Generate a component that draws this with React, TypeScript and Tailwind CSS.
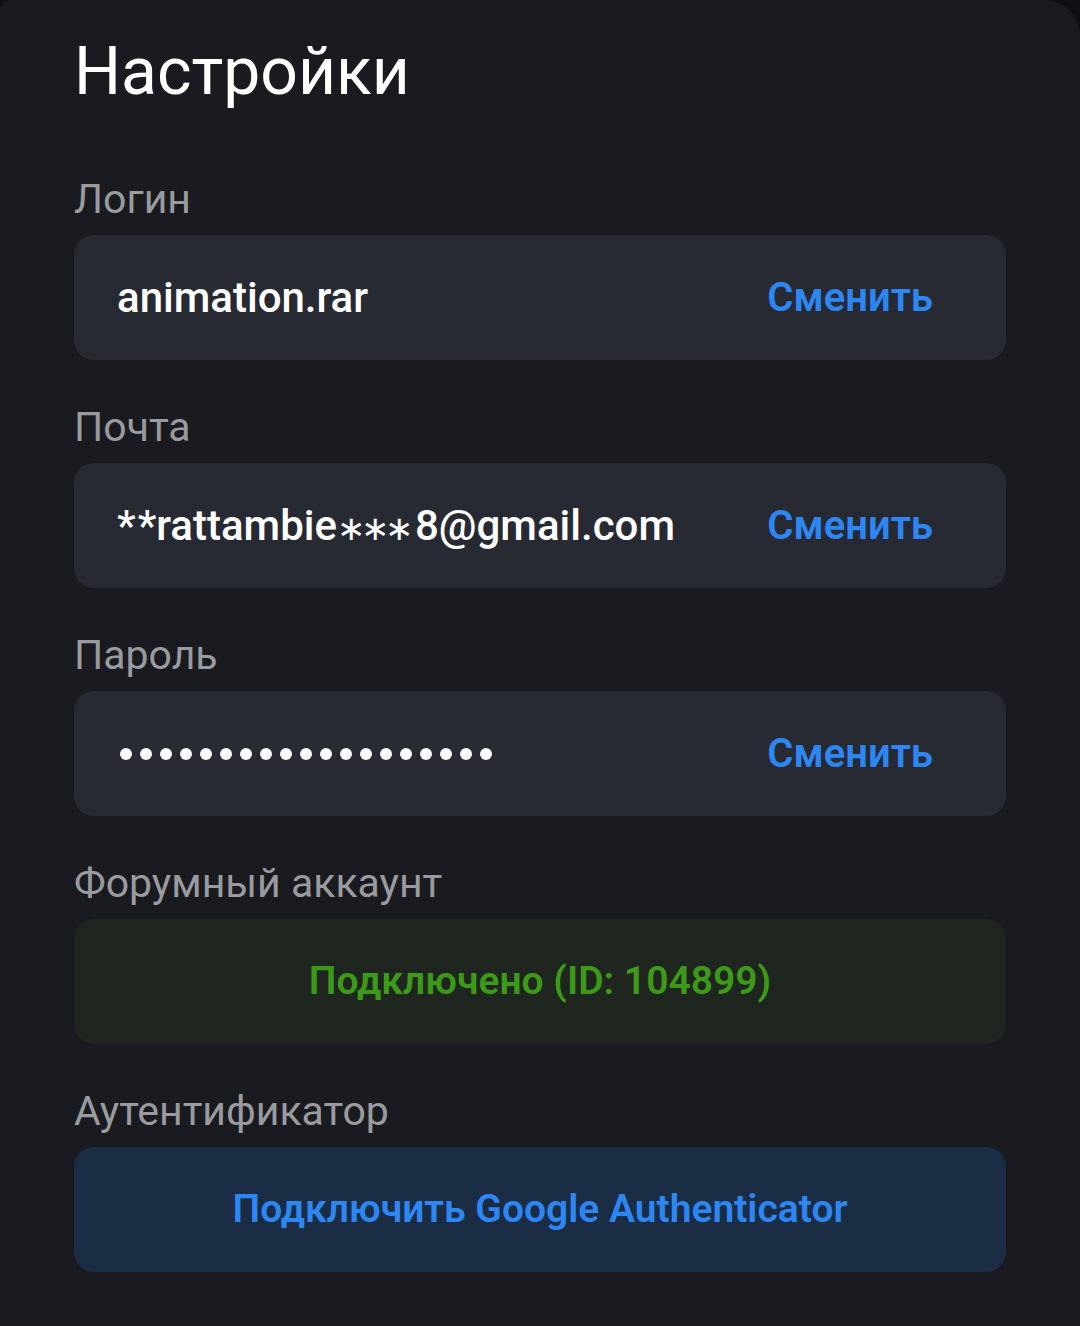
import React from 'react';

type Row = {
  label: string;
  value?: React.ReactNode;
  dots?: number;
};

const rows: Row[] = [
  { label: 'Логин', value: 'animation.rar' },
  {
    label: 'Почта',
    value: (
      <>
        <span className="tracking-[2px]">*</span>*rattambie<span className="text-[34px] tracking-[-4px]">∗∗∗</span><span className="ml-[6px]">8@gmail.com</span>
      </>
    ),
  },
  { label: 'Пароль', dots: 19 },
];

function Label({ children }: { children: React.ReactNode }) {
  return (
    <div className="mt-[43px] text-[41px] leading-[48px] text-[#9a9b9f]">{children}</div>
  );
}

export default function App() {
  return (
    <div className="min-h-[1326px] bg-[#0f1013] font-['Roboto','Noto_Sans',sans-serif]">
      <div className="min-h-[1326px] rounded-tl-[10px] rounded-tr-[36px] bg-[#1a1b20] px-[74px] pt-[32px]">
        <h1 className="text-[66px] leading-[80px] font-normal text-white">Настройки</h1>

        <div className="flex flex-col pt-[20px]">
          {rows.map((row) => (
            <div key={row.label} className="flex flex-col">
              <Label>{row.label}</Label>
              <div className="mt-[12px] flex h-[125px] items-center justify-between rounded-[20px] bg-[#282a33] pl-[43px] pr-[73px]">
                {row.value ? (
                  <span className="text-[42px] font-medium text-white">{row.value}</span>
                ) : (
                  <span className="ml-[3px] flex gap-[8px]">
                    {Array.from({ length: row.dots || 0 }).map((_, i) => (
                      <span key={i} className="h-[12px] w-[12px] rounded-full bg-white" />
                    ))}
                  </span>
                )}
                <span className="text-[40px] font-semibold text-[#2d87f3]">Сменить</span>
              </div>
            </div>
          ))}

          <Label>Форумный аккаунт</Label>
          <div className="mt-[12px] flex h-[125px] items-center justify-center rounded-[20px] bg-[#1f261f]">
            <span className="text-[39px] font-semibold text-[#3d9a18]">Подключено (ID: 104899)</span>
          </div>

          <Label>Аутентификатор</Label>
          <div className="mt-[12px] flex h-[125px] items-center justify-center rounded-[20px] bg-[#1a2d45]">
            <span className="text-[39px] font-semibold text-[#2d87f3]">Подключить Google Authenticator</span>
          </div>
        </div>
      </div>
    </div>
  );
}
